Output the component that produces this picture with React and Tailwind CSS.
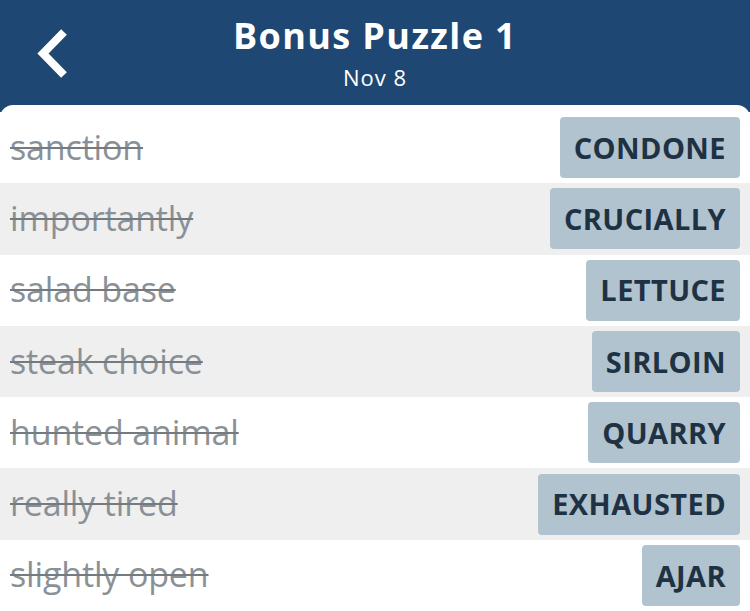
import React from "react";

const rows = [
  ["sanction", "CONDONE"],
  ["importantly", "CRUCIALLY"],
  ["salad base", "LETTUCE"],
  ["steak choice", "SIRLOIN"],
  ["hunted animal", "QUARRY"],
  ["really tired", "EXHAUSTED"],
  ["slightly open", "AJAR"],
];

export default function App() {
  return (
    <div className="w-[750px] h-[611px] overflow-hidden bg-[#1f4773]" style={{ fontFamily: "'Open Sans', 'Liberation Sans', sans-serif" }}>
      <header className="relative h-[105px] flex flex-col items-center text-white">
        <svg className="absolute left-[35px] top-[28px]" width="34" height="51" viewBox="0 0 34 51">
          <path d="M29 4 L8 25.5 L29 47" fill="none" stroke="white" strokeWidth="8" strokeLinecap="butt" strokeLinejoin="miter" />
        </svg>
        <div className="mt-[12px] text-[36px] leading-[48px] font-bold tracking-[1.4px]">Bonus Puzzle 1</div>
        <div className="mt-[4px] text-[22px] leading-[26px] tracking-[1px]">Nov 8</div>
      </header>
      <main className="bg-white rounded-t-[13px] pt-[7px]">
        {rows.map(([clue, answer], i) => (
          <div key={clue} className={`h-[71.3px] flex items-center justify-between pl-[10px] pr-[10px] ${i % 2 === 1 ? "bg-[#efefef]" : "bg-white"}`}>
            <span className="-mt-[2px] text-[34px] leading-[40px] tracking-[-0.15px] text-[#8a9196] line-through decoration-[#737b81] decoration-2">{clue}</span>
            <span className="h-[61px] flex items-center px-[14px] rounded-[4px] bg-[#b0c3cf] text-[#1e3244] text-[29px] font-bold tracking-[0.4px]">{answer}</span>
          </div>
        ))}
      </main>
    </div>
  );
}
